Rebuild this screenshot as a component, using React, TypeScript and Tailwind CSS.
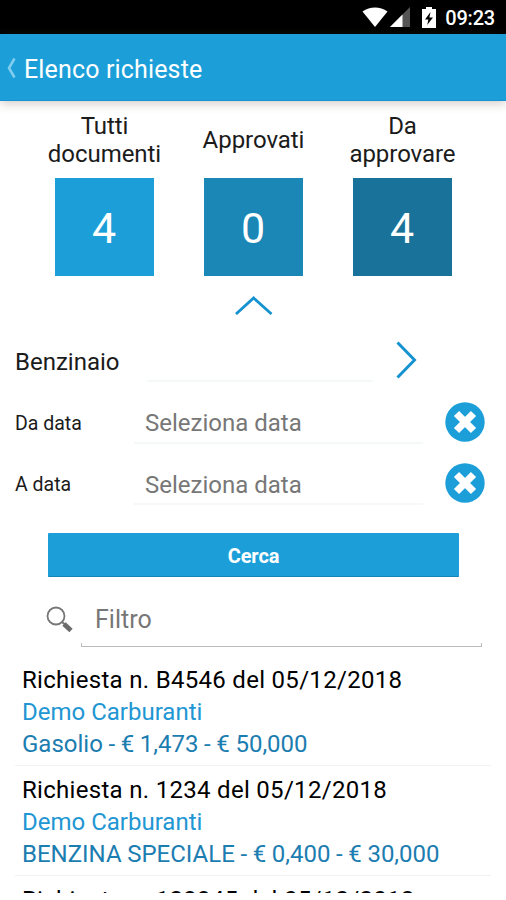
import React from 'react';

type Tile = { label: string; count: number; color: string };

const tiles: Tile[] = [
  { label: 'Tutti documenti', count: 4, color: 'bg-[#1c9fd9]' },
  { label: 'Approvati', count: 0, color: 'bg-[#1b87b7]' },
  { label: 'Da approvare', count: 4, color: 'bg-[#187299]' },
];

const requests = [
  { n: 'B4546', date: '05/12/2018', station: 'Demo Carburanti', fuel: 'Gasolio', price: '1,473', total: '50,000' },
  { n: '1234', date: '05/12/2018', station: 'Demo Carburanti', fuel: 'BENZINA SPECIALE', price: '0,400', total: '30,000' },
];

const StatusBar: React.FC = () => (
  <div className="h-[34px] shrink-0 bg-black text-white flex items-center justify-end pr-[11px]">
    <svg width="26" height="20" viewBox="0 0 26 20" className="fill-white">
      <path d="M0.5 4.5C8 -1 18 -1 25.5 4.5L13 20z" />
    </svg>
    <svg width="20" height="20" viewBox="0 0 20 20" className="ml-[2px]">
      <path d="M20 0v20H0z" fill="#555" />
      <path d="M12.5 7.5V20H0z" fill="#fff" />
    </svg>
    <svg width="14" height="21" viewBox="0 0 14 21" className="ml-[12px]">
      <path d="M4 0h6v2h4v19H0V2h4z" fill="#fff" />
      <path d="M8.5 5L3 12.5h3.4L5.2 18L11 10.4H7.4z" fill="#000" />
    </svg>
    <span className="ml-[9px] text-[20px] leading-none font-medium tracking-[-0.2px] pt-[2px]">09:23</span>
  </div>
);

const Header: React.FC = () => (
  <header className="h-[67px] shrink-0 bg-[#1c9fd9] border-b border-[#1592cf] shadow-[0_2px_10px_rgba(90,70,60,0.3)] flex items-center text-white z-10">
    <svg width="10" height="20" viewBox="0 0 10 20" className="ml-[6px] mt-[2px]" fill="none" stroke="#7fcdef" strokeWidth="2.6">
      <path d="M8.5 0.5L3 10l5.5 9.5" />
    </svg>
    <h1 className="ml-[8px] mt-[4px] text-[25px] leading-none tracking-[0.15px]">Elenco richieste</h1>
  </header>
);

const ClearButton: React.FC = () => (
  <button>
    <svg width="40" height="40" viewBox="0 0 40 40">
      <circle cx="20" cy="20" r="19.7" fill="#1c9fd9" />
      <path d="M11.5 11.5L28.5 28.5M28.5 11.5L11.5 28.5" stroke="#fff" strokeWidth="7.4" />
    </svg>
  </button>
);

const DateRow: React.FC<{ label: string }> = ({ label }) => (
  <div className="h-[61.5px] flex items-center pl-[15px] pr-[21.5px]">
    <span className="w-[119px] text-[19.5px] leading-none pt-[1px]">{label}</span>
    <div className="w-[289px] h-[42px] flex items-center border-b-2 border-[#f4f8f8] pl-[11px] pt-[3px] text-[24px] leading-none text-[#777]">
      Seleziona data
    </div>
    <div className="flex-1 flex justify-end -mt-[2px]"><ClearButton /></div>
  </div>
);

export default function App() {
  return (
    <div className="w-[506px] h-[900px] bg-white overflow-hidden flex flex-col text-[#1b1b1b] font-['Roboto',sans-serif]">
      <StatusBar />
      <Header />

      <div className="flex pl-[30px] mt-[10px]">
        {tiles.map((t) => (
          <div key={t.label} className="w-[149px] flex flex-col items-center">
            <div className="h-[58px] w-[120px] flex items-center justify-center text-center text-[24px] leading-[28px] tracking-[-0.05px]">{t.label}</div>
            <div className={`mt-[9px] w-[99px] h-[98px] flex items-center justify-center text-white text-[43px] leading-none pt-[3px] pr-[1px] ${t.color}`}>
              {t.count}
            </div>
          </div>
        ))}
      </div>

      <svg width="38" height="20" viewBox="0 0 38 20" className="mt-[19px] ml-[235px] shrink-0" fill="none" stroke="#1592d0" strokeWidth="2.8">
        <path d="M1 19L18.7 3L36.5 19" />
      </svg>

      {/* Search form */}
      <div className="mt-[16px] h-[61px] flex items-center pl-[15px]">
        <span className="w-[132px] text-[24px] leading-none">Benzinaio</span>
        <div className="w-[226px] h-[41px] border-b-2 border-[#f4f8f8]" />
        <svg width="21" height="38" viewBox="0 0 21 38" className="ml-[23px] -mt-[3px]" fill="none" stroke="#1592d0" strokeWidth="3">
          <path d="M1.5 1.5L18.5 19L1.5 36.5" />
        </svg>
      </div>
      <DateRow label="Da data" />
      <DateRow label="A data" />

      <button className="mt-[18px] ml-[48px] w-[411px] h-[44px] shrink-0 rounded-[1px] bg-[#1c9fd9] border-b border-[#1485b8] text-white text-[20px] leading-none font-bold tracking-[-0.1px] pt-[2px]">
        Cerca
      </button>

      <div className="h-[70px] shrink-0 flex items-end pl-[46px]">
        <svg width="27" height="27" viewBox="0 0 27 27" className="mb-[14px]" fill="none">
          <circle cx="10" cy="10" r="8.5" stroke="#777" strokeWidth="1.8" />
          <path d="M16 16L19 18.5" stroke="#777" strokeWidth="2" />
          <path d="M18 18L25 24.5" stroke="#6c6c6c" strokeWidth="4.8" />
        </svg>
        <div className="ml-[8px] w-[401px] flex flex-col">
          <span className="pl-[14px] text-[25px] leading-[28px] text-[#777] mb-[9px]">Filtro</span>
          <div className="h-[4px] border-x border-b border-[#bbb]" />
        </div>
      </div>

      <ul className="mt-[9px] h-[237px] shrink-0 overflow-hidden px-[15px] text-[24px] leading-[32px]">
        {requests.map((r) => (
          <li key={r.n} className="h-[110px] border-b border-[#f2f2f2] pt-[8px] pl-[7px] whitespace-nowrap">
            <div className="text-black tracking-[0.3px]">Richiesta n. {r.n} del {r.date}</div>
            <div className="text-[#2196d3]">{r.station}</div>
            <div className="text-[#1b7db0] [word-spacing:-0.35px]">{r.fuel} - € {r.price} - € {r.total}</div>
          </li>
        ))}
        {/* next row, only its top shows above the fold */}
        <li className="pt-[8px] pl-[7px] whitespace-nowrap text-black tracking-[0.3px]">Richiesta n. 123345 del 05/12/2018</li>
      </ul>
    </div>
  );
}
